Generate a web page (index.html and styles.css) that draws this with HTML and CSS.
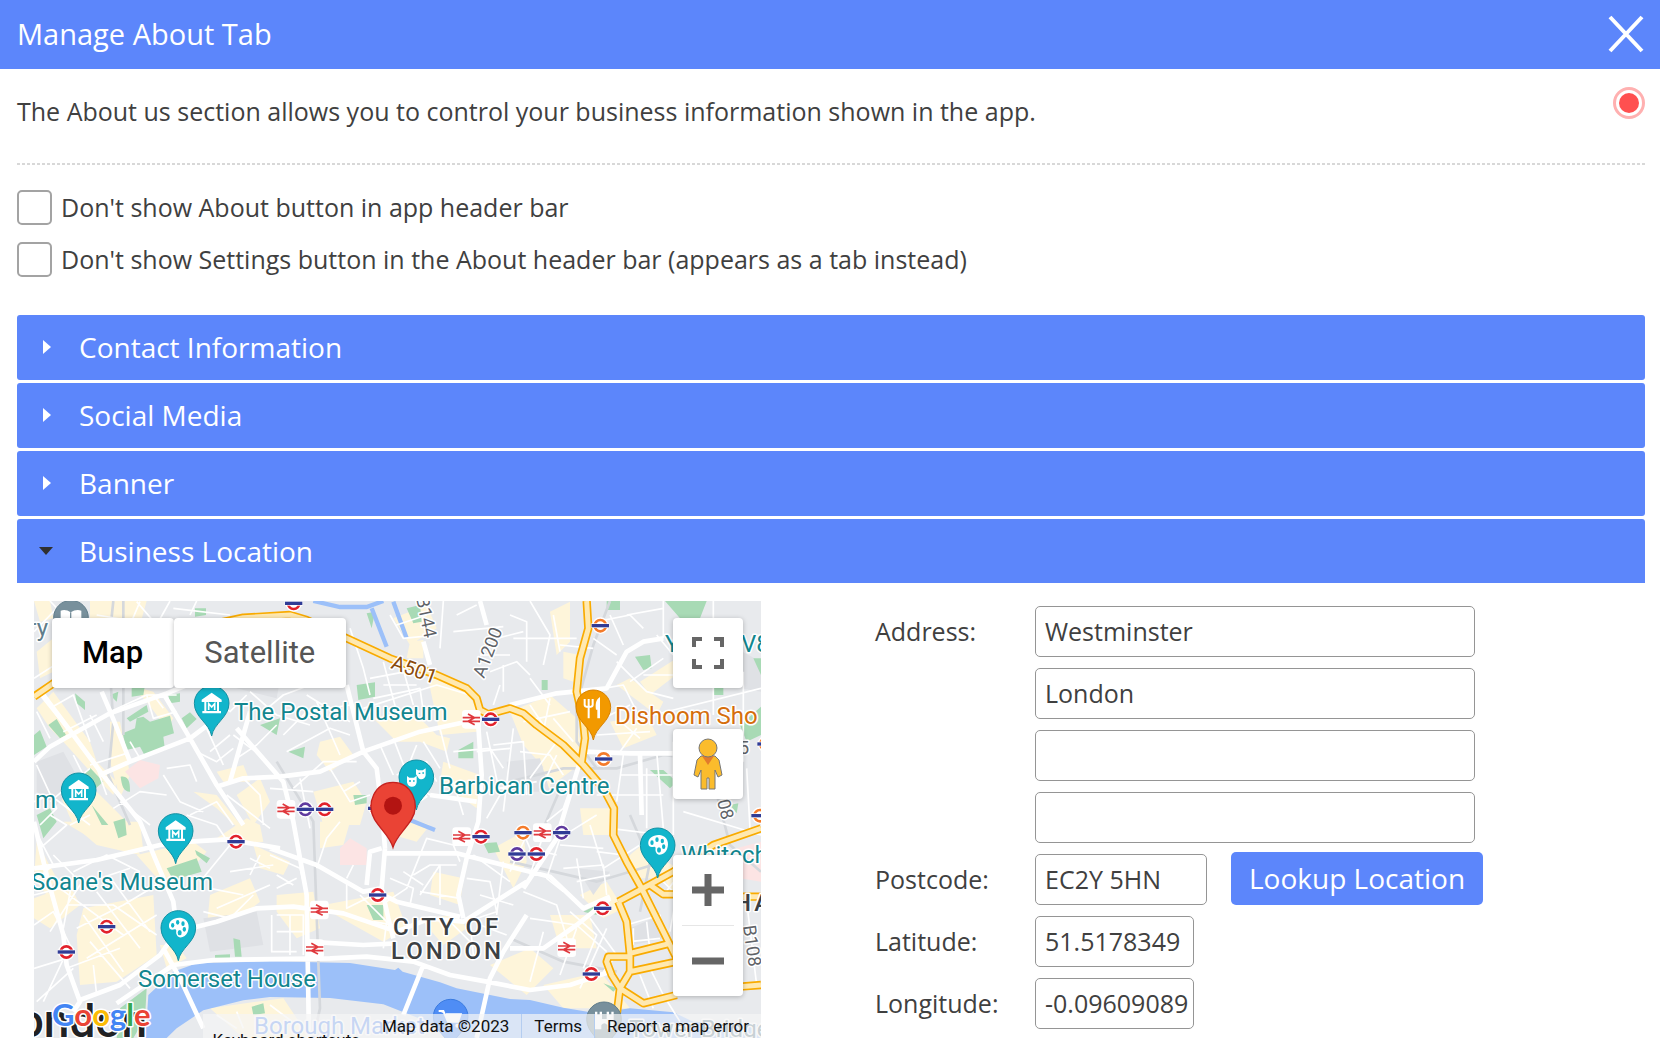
FILE: index.html
```html
<!DOCTYPE html>
<html lang="en">
<head>
<meta charset="utf-8">
<meta name="viewport" content="width=device-width, initial-scale=1">
<title>Manage About Tab</title>
<link rel="stylesheet" href="styles.css">
</head>
<body>
<header class="titlebar">
  <h1 class="title">Manage About Tab</h1>
  <button class="close" type="button" aria-label="Close"><svg viewBox="0 0 36 38" width="36" height="38"><path d="M2 2 34 36M34 2 2 36" stroke="#fff" stroke-width="4" fill="none"/></svg></button>
</header>
<main class="content">
  <div class="intro">
    <p class="intro-text">The About us section allows you to control your business information shown in the app.</p>
    <span class="record"></span>
  </div>
  <div class="options">
    <label class="option"><input class="check" type="checkbox"><span>Don't show About button in app header bar</span></label>
    <label class="option"><input class="check" type="checkbox"><span>Don't show Settings button in the About header bar (appears as a tab instead)</span></label>
  </div>
  <div class="accordion">
    <button class="section" type="button" aria-expanded="false"><span class="arrow"></span>Contact Information</button>
    <button class="section" type="button" aria-expanded="false"><span class="arrow"></span>Social Media</button>
    <button class="section" type="button" aria-expanded="false"><span class="arrow"></span>Banner</button>
    <button class="section section-open" type="button" aria-expanded="true"><span class="arrow arrow-down"></span>Business Location</button>
  </div>
  <div class="panel">
    <div class="map">
      <svg class="map-layer" viewBox="12 18 2181 1311" preserveAspectRatio="xMinYMin slice" aria-hidden="true">
        <defs>
          <path id="drop" d="M0 98C-6 60-52 42-52 0A52 52 0 1 1 52 0C52 42 6 60 0 98Z"/>
          <g id="bar"><rect x="-27" y="-7" width="54" height="14" fill="#fff"/><rect x="-26" y="-5" width="52" height="10" fill="#303c96"/></g>
          <g id="red"><circle r="25" fill="#fff"/><circle r="17" fill="#fff" stroke="#e2222b" stroke-width="8"/><use href="#bar"/></g>
          <g id="purple"><circle r="25" fill="#fff"/><circle r="17" fill="#fff" stroke="#5f3a9e" stroke-width="8"/><use href="#bar"/></g>
          <g id="orange"><circle r="25" fill="#fff"/><circle r="17" fill="#fff" stroke="#f47b2a" stroke-width="8"/><use href="#bar"/></g>
          <g id="rail"><rect x="-28" y="-28" width="56" height="56" rx="10" fill="#fff"/><path d="M-26-5H26M-26 6H26M-10-16 10-5-10 6 10 16" fill="none" stroke="#e0393e" stroke-width="5"/></g>
          <g id="museum" fill="#fff"><path d="M-30-16 0-37 30-16V-9H-30ZM-22-9H-16V18H-22ZM16-9H22V18H16ZM-28 18H28V25H-28Z"/><path d="M-9 15V-4L0 6 9-4V15" fill="none" stroke="#fff" stroke-width="5"/></g>
          <g id="palette"><path d="M-28-4C-30-22-10-34 10-30 28-26 36-8 28 12 22 28 2 34-4 22-10 12-2 6-10 4-20 6-26 6-28-4Z" fill="#fff"/><g fill="#12b5cb"><ellipse cx="-17" cy="-8" rx="5" ry="7"/><ellipse cx="-2" cy="-17" rx="5" ry="7"/><ellipse cx="14" cy="-13" rx="5" ry="7"/><ellipse cx="18" cy="4" rx="5" ry="7"/><ellipse cx="4" cy="14" rx="6" ry="8"/></g></g>
          <path id="trunk" d="M12 305 70 265 120 230M560 85 640 68 780 60 830 75 950 130 1080 190 1220 240 1310 280 1340 310 1350 345 1375 358 1440 340 1480 355 1520 390 1600 450 1660 510 1720 580 1752 640 1750 720 1790 800 1835 880 1880 970 1920 1050 1945 1100M1670 18 1675 100 1650 190 1640 290 1660 380 1665 430 1655 500M1765 920 1830 885 1930 830 2050 750 2193 700M1765 920 1790 980 1800 1080V1130L1770 1180 1840 1225 1940 1200M1800 1075 1920 1045M1800 1130 1940 1100M1800 1085H1735L1730 1100 1745 1140 1770 1180 1760 1260M1860 870 1900 898H1930M2130 905H2193M2130 1175 2193 1170"/>
        </defs>
        <rect x="12" y="18" width="2181" height="1311" fill="#e8eaed"/>
        <!-- built-up areas -->
        <g fill="#fef5da">
          <path d="M12 18H60L70 70 30 80ZM180 18H350L330 90H250L240 200 180 150ZM20 170 70 130V230L30 250ZM20 340 70 290 180 440 200 500 260 560 250 600 190 540 100 440 60 400ZM240 380H270L290 480 300 540 270 610 240 500ZM90 600 200 590 250 640 300 690 330 780 200 750 130 690ZM300 270 370 290 430 370 410 400 350 320ZM490 590 560 600 640 700 690 760 560 640ZM620 600 690 550 720 620 670 690ZM560 530 640 510 660 560 580 560Z"/>
          <path d="M1090 70 1190 30 1220 100 1140 150ZM1140 140 1180 135V190H1130ZM1190 230 1310 280 1350 370 1340 410 1230 420ZM870 440 930 425 970 480 900 530 860 480ZM1030 370 1140 340 1220 420 1260 430 1250 470 1170 440 1100 440ZM850 590 970 560 1010 620 990 690H880ZM1240 500 1350 540 1340 640 1230 560ZM1440 350 1560 300 1640 370 1660 500 1580 560 1480 450ZM1560 50 1620 20V140L1580 180ZM1600 170 1650 180 1630 260 1600 250ZM1650 640 1750 640 1760 720H1660ZM1740 380 1850 360 1880 420 1780 460ZM1760 270 1800 250 1900 320 1880 360ZM1830 260 1940 190 1950 230 1860 300ZM1500 500 1570 530 1560 580 1490 570Z"/>
          <path d="M100 680 330 680 340 770 200 740ZM320 780 490 740 530 770 460 850 400 870ZM12 910 120 870 150 930 60 1000 12 970ZM160 940 370 900 380 1080 260 1160 150 1170 140 1020ZM390 1050 440 1050 470 1090 410 1120ZM540 900 660 850 690 920 580 1010 530 1000ZM20 740 80 850 50 900 12 850ZM560 730 620 750 700 740 690 690 650 670ZM670 750 780 800 760 840 690 820Z"/>
          <path d="M740 900 850 890 870 1000 800 1030 740 950ZM880 930 1090 890 1130 1000 1060 1040 900 950ZM1210 830 1300 850 1290 930 1200 900ZM1170 970 1280 960 1310 1000 1240 1050ZM1110 660 1200 690 1160 740 1090 720ZM870 680 960 680 940 750 870 760ZM1390 760 1480 710 1490 800 1450 880ZM1380 1110 1500 1060 1570 1120 1490 1200ZM1560 960 1680 960 1700 1060 1590 1060ZM1650 900 1730 860 1780 940 1720 970ZM1800 780 1860 730 1880 850 1800 850ZM1540 1170 1710 1130 1800 1240 1600 1240ZM1860 770 1960 830 1940 920ZM540 1240 680 1220 760 1210 840 1329H640Z"/>
        </g>
        <path d="M1950 70 2193 200V290L1950 250ZM640 130 760 200 740 310 620 280ZM20 500 100 470 150 560 80 630 20 590ZM1640 820 1740 830 1690 900ZM1800 1000 1870 970 1900 1030 1810 1050ZM1430 500 1530 490 1560 590 1440 590ZM520 970 680 950 700 1050 540 1070Z" fill="#dfe1e5"/>
        <path d="M285 530 330 495 390 510 385 550 330 580ZM930 760 960 730 1010 760V810L930 810ZM2120 760 2193 740V860L2130 850Z" fill="#fce4e4"/>
        <!-- parks -->
        <g fill="#a8dab5">
          <path d="M135 295 165 320V345L140 325ZM240 300 265 290 260 320ZM305 280 345 270 340 300 305 305ZM290 370 350 330 355 350 300 380ZM415 300 450 295V320L420 325ZM278 415 315 400 320 370 340 365 360 380 420 362 432 415 400 425 405 465 345 483 330 455 290 465ZM55 390 80 372 108 420 90 430ZM12 420 30 405 50 455 12 480ZM455 370 480 352 500 372 470 400ZM495 40H528V60L495 65ZM160 535 180 518 220 560 185 590ZM272 545C300 540 300 570 300 590 280 590 275 570 272 545ZM185 630 235 690H215ZM20 660 60 640 80 680 40 730ZM250 680 285 670 290 720 265 730ZM690 390 750 370 740 420Z"/>
          <path d="M1010 55 1035 50 1025 100ZM1130 40 1170 30 1175 80 1150 85ZM980 270 1035 262V305L985 315ZM775 470 825 455 820 490ZM1285 465 1330 440 1330 490H1285ZM970 600H1010V625L975 630ZM1730 18H1770V45H1730ZM1905 18H2030L2010 70H1950ZM1815 185 1860 180 1865 220 1840 225ZM1535 255H1553V285H1535ZM1860 525H1900L1940 560 1920 580ZM2050 275H2080V300H2050ZM2130 390 2193 335V420L2150 440ZM2100 630 2125 625 2120 655ZM2170 190H2193V240Z"/>
          <path d="M410 820 500 790 515 830 430 855ZM495 765 540 790 530 805 500 780ZM610 1030 630 1035 635 1085 615 1085ZM665 1235 700 1225 705 1255 670 1260ZM270 1240 350 1180 345 1270 310 1329H260ZM1010 930H1060V975H1030ZM1360 745 1400 742 1410 770 1375 775ZM1660 950 1700 930 1700 960ZM1720 1165 1760 1180 1750 1190ZM555 1080 600 1078V1090H555Z"/>
        </g>
        <!-- river and canals -->
        <path d="M335 1329 350 1280 355 1200 430 1130 500 1105 720 1099 960 1104 1095 1125 1105 1118 1118 1130 1230 1162 1280 1180 1440 1212 1500 1215 1600 1238 1700 1255 1800 1240 1930 1252 1990 1280 2193 1290V1329H1260L1180 1275 1060 1228 900 1209 720 1206 640 1216 520 1246 440 1300 410 1329Z" fill="#9cc0f9"/>
        <path d="M850 18 930 36 1010 36 1060 18M1025 40 1070 155M1090 20 1130 130M1140 675 1215 705" fill="none" stroke="#9cc0f9" stroke-width="13"/>
        <!-- railways -->
        <path d="M250 18 235 160 250 380 235 540 300 690 M280 18 V420M740 500 850 680 870 1240 850 1329M1440 560 1600 520 1760 520 1900 480 1990 490M1600 560 1540 700M1740 18 1690 150 1640 330 1640 440 1700 520M1440 800 1700 860 1900 800M1440 1030 1600 1100 1760 1130 M1800 660 1860 800 1830 950 M2040 520 2100 750 2193 830" fill="none" stroke="#d5d8dc" stroke-width="8"/>
        <!-- minor streets -->
        <g fill="none" stroke="#fff" stroke-width="5" stroke-linejoin="round">
          <path d="M12 110 90 30M60 18 100 60M12 250 90 200M20 350 60 430M60 340 130 300 180 440M110 400 30 300M130 480 170 560 190 620M100 410 200 360M180 510 290 475M190 490 230 600M300 440 330 490M20 510 80 640 30 690M60 620 180 520M12 620 60 600 180 690M250 640 330 590 410 600M270 620 360 690M400 540 450 620 520 650M410 520 480 510 500 560M500 470 560 500 610 460M370 300 400 340M240 350 350 300 440 300M350 300 370 370 440 350M180 360 220 440M520 300 600 350 650 300M600 420 540 470M530 400 580 510M610 420 690 480M480 660 560 620 610 690M590 600 720 700M640 550 690 600 700 690M620 490 680 450 740 390M700 350 760 300 840 270M660 290 740 360 840 390M720 580 850 590M330 20 300 90M200 60 380 90 420 18M430 40 600 60M480 60 500 18M380 90 320 20"/>
          <path d="M760 420 830 350 960 330M770 470 900 400 960 420M830 300 960 380M860 320 930 480M790 580 880 500 980 500M810 550 840 700M900 520 960 620 1020 600M940 590 990 560M960 100 1000 220 1020 300M1020 250 1180 220M1030 310 1170 280 1180 350M1000 340 1220 270 1320 300M1060 200 1100 350M1110 190 1150 330M1060 270H1160M1080 60 1120 130 1220 120M1100 90 1190 60M1240 18 1230 160M1280 60 1340 30M1270 110 1420 95M1400 130 1480 110M1380 230 1460 200 1500 240M1350 180 1440 180M1410 270 1390 330M1420 210V290M1270 470 1380 460 1420 520M1230 400 1260 520M1180 440 1230 520M1090 430 1140 560 1200 600M1100 540 1190 500 1220 560M1160 450 1140 500M1050 450 1090 540M1270 560 1300 660M1340 470 1440 460M1370 410 1410 600 1370 670M1450 400 1420 650M1390 450 1480 440 1490 600M1350 590 1520 560"/>
          <path d="M1440 60 1490 80 1490 200M1450 130 1640 130M1500 18 1560 120 1540 210M1570 60 1590 170M1590 150 1690 160M1690 130 1760 180M1700 80 1800 60 1840 100M1740 60 1780 150M1790 60 1900 40M1760 200 1850 290 1930 310M1720 280 1780 270 1820 350M1800 260 1900 190M1900 18 1900 130M1880 120 1930 180M1840 240 1930 240M1500 250 1560 330M1560 310 1540 410M1500 330 1560 420M1480 380 1620 350M1570 370 1630 440M1470 470 1560 480 1600 540M1500 550 1580 440M1530 590 1580 480M1650 500 1600 640 1550 680M1700 600 1900 600M1780 480 1760 620M1880 470 1900 700M1850 520V700M1770 540 1930 540M1930 440V720M1760 370 1830 430M1820 400 1770 470M1700 420 1860 410M1700 380 1800 330M1870 360 2193 280M2050 18V360M2140 230V500M2150 520 2160 700M1960 650 2193 720"/>
          <path d="M12 700 70 810 12 860M30 760 110 690 60 660M120 690 180 660M70 780 130 840 100 1000M130 830 230 780 330 830M12 900 90 880 280 1020M60 1010 150 870 300 820M110 930 250 930 380 1020M140 1000 280 930 380 870M160 960 280 1130M200 890 330 1060M250 860 360 1010M170 1090 380 960M180 1040 300 1180M110 1120 270 1060M12 990 70 950 120 1050 40 1220M20 1220 130 1120M12 1120 110 1090M190 1110 200 1200M470 660 560 690M510 860 600 750 560 690M600 830 730 810M660 840 690 780M540 880 640 900M560 940 720 870M660 790 720 820M520 950 600 970 670 900M720 780 810 820 830 900M740 880 800 850M740 960 820 960 820 1080M725 960V1070H800M780 960V1080M740 1010H820M740 840 790 870M950 850 970 810M860 820 890 730 930 680M950 860 950 940 1030 900M990 900 1070 980 1060 1060M1030 980 1090 990M1080 850 1150 880 1140 930M1070 920 1130 880 1190 730 1270 750 1290 800M1120 830 1180 870M1170 900 1230 810 1230 930M1170 890 1290 910M1150 840 1200 810H1280M1310 850 1380 860 1400 950 1310 980M1330 780 1440 860M1420 800 1400 960M1350 900 1450 930M1260 980 1320 1040M1320 980 1330 1080M1350 990 1430 1020"/>
          <path d="M1470 690 1500 760 1580 780M1490 720 1440 830M1540 720 1500 840M1590 730 1550 850 1600 890M1640 790 1660 910M1700 660 1620 710M1680 690 1720 820 1830 750M1700 770 1780 780M1600 820 1720 810 1730 900M1590 750 1720 760M1640 860 1740 840M1480 890 1580 930 1620 1060M1500 970 1640 990 1730 1070M1620 950 1700 1020 1660 1120M1540 1010 1500 1160M1640 1000 1590 1140M1680 970 1760 1080 1720 1130M1730 1000 1650 1180M1790 990 1890 960 1900 1030M1810 1000V1050M1850 980 1860 1070M1800 1040 1890 1030M1860 1120 1900 1200 1950 1280M1830 1140 1870 1240M2150 920 2180 1170M1900 900 1940 850M1740 700 1900 720M1890 850 1940 900 1920 1010M560 1260 620 1300M620 1250 640 1300M720 1230 800 1290"/>
        </g>
        <!-- main streets -->
        <path d="M12 500 60 455 240 355 410 295 520 250M40 300 130 420 215 535 330 680 375 790 430 920 440 1000M400 295 480 430 560 570 640 690M210 540 300 500 480 430 560 370M215 290 245 360 300 500M12 820 200 795 390 750 480 740 590 733 750 760M600 560 640 420 660 350M560 575 640 550 750 545 870 530 1000 470 1170 410 1310 380M620 400 760 560 790 680 830 900 837 1329M950 270 1000 470 1040 520 1055 640 1065 760M720 760 860 810 1000 890 1055 880M12 680 50 840 100 1020 110 1110 150 1220 130 1250M150 1215 270 1170 390 1080 440 1010 560 980 680 940 790 935 940 955 1100 1010 1200 970 1300 980 1490 860M260 1225 430 1110 550 1095 900 1090 1010 1085 1150 1100 1260 1140 1370 1160 1500 1185 1620 1170 1740 1130M400 1060 450 1150 520 1300M830 1040 1000 1050 1100 1045M1060 900 1100 920 1290 965M1055 760 1020 770 1010 870M1065 760 1055 880 1075 970 1090 1030M1065 775 1280 775 1440 815 1560 845 1660 940 1740 905M1340 320 1355 540 1345 680 1310 790 1285 900 1300 970M1180 140 1200 210M1350 18 1370 90M1200 600 1340 620M1190 600 1130 640M1180 1110 1120 1260M1490 960 1420 1070 1380 1150 1340 1329M1440 330 1580 295 1730 280 1790 170 1840 140 1900 130M1660 470 1800 475 1980 475M1830 480 1835 660M1440 1060 1540 1060 1640 990 1740 910M1480 880 1580 730 1650 500" fill="none" stroke="#fff" stroke-width="14" stroke-linejoin="round"/>
        <!-- trunk roads -->
        <g fill="none" stroke-linejoin="round"><use href="#trunk" stroke="#f9ab00" stroke-width="25"/><use href="#trunk" stroke="#ffe9b0" stroke-width="15"/></g>
        <!-- stations -->
        <use href="#red" x="791" y="25"/><use href="#rail" x="1324" y="373"/><use href="#red" x="1382" y="373"/>
        <use href="#rail" x="768" y="643"/><use href="#purple" x="826" y="643"/><use href="#red" x="884" y="643"/><use href="#red" x="1040" y="640"/>
        <use href="#orange" x="1711" y="92"/><use href="#orange" x="1721" y="492"/><use href="#orange" x="2190" y="662"/><use href="#orange" x="2208" y="447"/>
        <use href="#red" x="618" y="740"/><use href="#red" x="230" y="995"/><use href="#red" x="109" y="1071"/>
        <use href="#rail" x="1295" y="725"/><use href="#red" x="1353" y="725"/><use href="#red" x="1043" y="900"/><use href="#rail" x="868" y="945"/><use href="#rail" x="854" y="1061"/>
        <use href="#orange" x="1479" y="713"/><use href="#rail" x="1537" y="713"/><use href="#purple" x="1595" y="713"/><use href="#purple" x="1461" y="777"/><use href="#red" x="1519" y="777"/>
        <use href="#red" x="1718" y="940"/><use href="#rail" x="1610" y="1058"/><use href="#red" x="1684" y="1137"/>
        <!-- places -->
        <g fill="#12b5cb" stroke="#1491a3" stroke-width="3"><use href="#drop" x="545" y="325"/><use href="#drop" x="146" y="586"/><use href="#drop" x="437" y="708"/><use href="#drop" x="445" y="999"/><use href="#drop" x="1159" y="547"/><use href="#drop" x="1883" y="751"/></g>
        <use href="#museum" x="545" y="330"/><use href="#museum" x="146" y="591"/><use href="#museum" x="437" y="713"/><use href="#palette" x="445" y="999"/><use href="#palette" x="1883" y="751"/>
        <path d="M1131 543 1138 548H1152L1160 542V562C1158 580 1134 580 1131 562ZM1158 522 1165 526H1178L1187 520V541C1185 555 1170 556 1165 548L1158 538Z" fill="#fff"/>
        <path d="M1137 558H1143M1149 558H1154M1166 535H1171M1177 534H1182" stroke="#12b5cb" stroke-width="4"/>
        <use href="#drop" x="1690" y="337" fill="#f29900" stroke="#d78100" stroke-width="3"/>
        <path d="M1664 312V330C1664 338 1688 338 1688 330V312M1676 312V370" fill="none" stroke="#fff" stroke-width="6"/><path d="M1710 306C1696 314 1696 332 1698 344H1702V370H1710Z" fill="#fff"/>
        <use href="#drop" x="123" y="68" fill="#78909c" stroke="#607d8b" stroke-width="3"/><path d="M92 47Q108 42 122 52 138 42 154 47V88Q138 82 122 90 108 82 92 88Z" fill="#fff"/><path d="M122 52V90" stroke="#78909c" stroke-width="4"/>
        <use href="#drop" x="1262" y="1265" fill="#4f8df5" stroke="#3a7be0" stroke-width="3"/><path d="M1226 1248H1240L1254 1280H1284L1292 1258H1248" fill="#fff" stroke="#fff" stroke-width="6"/><circle cx="1258" cy="1292" r="6" fill="#fff"/><circle cx="1282" cy="1292" r="6" fill="#fff"/>
        <use href="#drop" x="1722" y="1273" fill="#78909c" stroke="#607d8b" stroke-width="3"/><path d="M1695 1303V1250H1702V1259H1709V1250H1716V1272H1730V1250H1737V1259H1744V1250H1751V1303H1732V1290Q1723 1280 1714 1290V1303Z" fill="#fff"/>
        <path d="M1089 757C1080 725 1054 706 1034 674 1006 624 1036 562 1089 562 1142 562 1174 624 1144 674 1124 706 1098 725 1089 757Z" fill="#ea4335" stroke="#c5221f" stroke-width="4"/><circle cx="1089" cy="632" r="27" fill="#b31412"/>
      </svg>
      <svg class="map-layer map-labels" viewBox="0 0 727 437" preserveAspectRatio="xMinYMin slice">
        <g class="poi"><text x="200" y="119">The Postal Museum</text><text x="405" y="193">Barbican Centre</text><text x="647" y="262">Whitech</text><text x="631" y="51">Y</text><text x="707" y="51">V8</text><text x="-3" y="289">Soane's Museum</text><text x="104" y="386">Somerset House</text><text x="1" y="207">m</text></g>
        <text class="food" x="581" y="123">Dishoom Sho</text>
        <text class="civic" x="14" y="35" text-anchor="end">ry</text>
        <text class="civic" x="595" y="436">Tower Bridge</text>
        <text class="shop" x="220" y="433">Borough Market</text>
        <g class="district"><text x="359" y="334">CITY OF</text><text x="357" y="358">LONDON</text><text x="700" y="310">HA</text></g>
        <g class="road"><text class="road-a" transform="translate(356 67) rotate(20)">A501</text><text transform="translate(450 78) rotate(-69)">A1200</text><text transform="translate(382 -3) rotate(78)">B144</text><text transform="translate(709 325) rotate(82)">B108</text><text transform="translate(683 200) rotate(76)">08</text><text x="705" y="153">5</text></g>
        <text class="city" x="113" y="436" text-anchor="end">London</text>
        <text class="google" x="18" y="425"><tspan fill="#4285f4">G</tspan><tspan fill="#ea4335">o</tspan><tspan fill="#fbbc04">o</tspan><tspan fill="#4285f4">g</tspan><tspan fill="#34a853">l</tspan><tspan fill="#ea4335">e</tspan></text>
      </svg>
      <div class="map-types"><button class="map-type map-type-on" type="button">Map</button><button class="map-type" type="button">Satellite</button></div>
      <div class="map-tools">
        <button class="tool" type="button" aria-label="Toggle fullscreen view"><svg width="32" height="32" viewBox="0 0 32 32"><path d="M2 10V2H10M22 2H30V10M30 22V30H22M10 30H2V22" fill="none" stroke="#666" stroke-width="4"/></svg></button>
        <button class="tool pegman" type="button" aria-label="Drag Pegman onto the map"><svg width="30" height="52" viewBox="0 0 30 52"><path d="M8 18 22 18 26 22 29 37 25 39 22 32V51H16V40H14V51H8V32L5 39 1 37 4 22Z" fill="#fbbc2c" stroke="#777" stroke-width="1"/><path d="M9 18H21L15 27Z" fill="#e27b2c"/><circle cx="15" cy="10" r="9" fill="#fbbc2c" stroke="#777"/></svg></button>
        <div class="zoom">
          <button class="zoom-button" type="button" aria-label="Zoom in"><svg width="32" height="32" viewBox="0 0 32 32"><path d="M0 16H32M16 0V32" stroke="#666" stroke-width="7"/></svg></button>
          <button class="zoom-button" type="button" aria-label="Zoom out"><svg width="32" height="32" viewBox="0 0 32 32"><path d="M0 16H32" stroke="#666" stroke-width="7"/></svg></button>
        </div>
      </div>
      <div class="credits"><button class="shortcuts" type="button">Keyboard shortcuts</button><span class="credit">Map data ©2023</span><a class="credit" href="#terms">Terms</a><a class="credit" href="#report">Report a map error</a></div>
    </div>
    <form class="form">
      <label class="label" for="address1">Address:</label>
      <div class="fields"><input class="input" id="address1" type="text" value="Westminster"><input class="input" type="text" value="London" aria-label="Address line 2"><input class="input" type="text" aria-label="Address line 3"><input class="input" type="text" aria-label="Address line 4"></div>
      <label class="label" for="postcode">Postcode:</label>
      <div class="postcode-row"><input class="input input-postcode" id="postcode" type="text" value="EC2Y 5HN"><button class="lookup" type="button">Lookup Location</button></div>
      <label class="label" for="latitude">Latitude:</label>
      <input class="input input-coord" id="latitude" type="text" value="51.5178349">
      <label class="label" for="longitude">Longitude:</label>
      <input class="input input-coord" id="longitude" type="text" value="-0.09609089">
    </form>
  </div>
</main>
</body>
</html>
```
FILE: styles.css
```css
* { box-sizing: border-box; }

body {
  margin: 0;
  background: #fff;
  color: #404040;
  font: 25px/34px "Open Sans", sans-serif;
}

button, input { font: inherit; color: inherit; margin: 0; }
button { border: 0; padding: 0; background: none; cursor: pointer; }

.titlebar {
  display: flex;
  align-items: center;
  justify-content: space-between;
  height: 69px;
  padding: 0 16px 2px 17px;
  background: #5c86fb;
  color: #fff;
}
.title { margin: 0; font-size: 29px; font-weight: 400; line-height: 40px; }
.close { display: flex; }

.content { padding: 0 15px 0 17px; }

.intro {
  display: flex;
  align-items: flex-start;
  justify-content: space-between;
  height: 96px;
  padding-top: 18px;
  background: repeating-linear-gradient(90deg, #d8d8d8 0 3px, #fff 3px 5px) left bottom / 100% 2px no-repeat;
}
.intro-text { margin: 7px 0 0; }
.record {
  width: 32px;
  height: 32px;
  border: 3px solid #ffb0b0;
  border-radius: 50%;
  padding: 3px;
  background: #ff5050;
  background-clip: content-box;
}

.options { display: flex; flex-direction: column; gap: 17px; padding: 25px 0 38px; }
.option { display: flex; align-items: center; gap: 9px; height: 35px; line-height: 32px; }
.option span { padding-bottom: 2px; }
.check {
  appearance: none;
  width: 35px;
  height: 35px;
  margin: 0;
  border: 2px solid #a3a3a3;
  border-radius: 5px;
  background: #fff;
}

.accordion { display: flex; flex-direction: column; gap: 3px; }
.section {
  display: flex;
  align-items: center;
  height: 65px;
  padding: 0 0 1px 22px;
  border-radius: 3px;
  background: #5c86fb;
  color: #fff;
  font-size: 28px;
  text-align: left;
}
.section-open { height: 64px; border-radius: 3px 3px 0 0; }
.arrow { display: flex; width: 40px; padding-left: 4px; }
.arrow::before { content: ""; border-left: 8px solid #fff; border-top: 7px solid transparent; border-bottom: 7px solid transparent; }
.arrow-down { padding-left: 0; }
.arrow-down::before { border: 7px solid transparent; border-top: 8px solid #303030; border-bottom: 0; }

.panel {
  display: grid;
  grid-template-columns: minmax(0, 727fr) minmax(0, 770fr);
  gap: 114px;
  padding: 18px 0 8px 17px;
}

.map { position: relative; height: 437px; overflow: hidden; background: #e8eaed; font-family: Roboto, sans-serif; }
.map-layer { position: absolute; inset: 0; width: 100%; height: 100%; }

.map-labels { font-size: 24px; }
.map-labels text { paint-order: stroke; stroke: #fff; stroke-width: 3px; stroke-linejoin: round; }
.poi { fill: #12868f; }
.food { fill: #d56e0c; }
.civic { fill: #607d8b; }
.shop { fill: #5b8def; }
.district { fill: #3c4043; font-weight: 500; letter-spacing: 3px; }
.road { fill: #5f6368; font-size: 18px; }
.road-a { fill: #8a4b0b; font-size: 20px; }
.city { fill: #202124; font-size: 46px; font-weight: 500; }
.google { font-family: Lato, sans-serif; font-size: 31px; font-weight: 700; }

.map-types { position: absolute; left: 18px; top: 17px; display: flex; }
.map-type {
  height: 70px;
  padding: 0 31px 0 30px;
  border-radius: 4px;
  background: #fff;
  color: #565656;
  font-size: 31px;
  box-shadow: 0 1px 5px rgba(0, 0, 0, .25);
}
.map-type-on { color: #000; font-weight: 500; }

.map-tools { position: absolute; right: 18px; top: 17px; display: flex; flex-direction: column; }
.tool, .zoom-button { display: flex; align-items: center; justify-content: center; width: 70px; height: 70px; }
.tool, .zoom { border-radius: 4px; background: #fff; box-shadow: 0 1px 5px rgba(0, 0, 0, .25); }
.pegman { margin-top: 41px; }
.zoom { margin-top: 56px; }
.zoom-button + .zoom-button { height: 71px; background: linear-gradient(#e6e6e6, #e6e6e6) center top / 52px 1px no-repeat; }

.credits {
  position: absolute;
  right: 0;
  bottom: 0;
  display: flex;
  justify-content: flex-end;
  height: 24px;
  background: rgba(245, 245, 245, .7);
  color: #111;
  font-size: 17px;
  line-height: 24px;
  white-space: nowrap;
}
.credit { padding: 0 12px; color: inherit; text-decoration: none; }
.credit + .credit { border-left: 1px solid #b4cdf0; }
.shortcuts { align-self: flex-start; padding: 16px 10px 0; line-height: 20px; }

.form { display: grid; grid-template-columns: 160px minmax(0, 1fr); gap: 11px 0; align-content: start; padding-top: 5px; }
.label { height: 51px; line-height: 50px; }
.fields { display: flex; flex-direction: column; gap: 11px; }
.input {
  width: 100%;
  max-width: 440px;
  height: 51px;
  padding: 0 0 2px 9px;
  border: 1px solid #959595;
  border-radius: 5px;
  background: #fff;
}
.postcode-row { display: flex; align-items: flex-end; gap: 24px; height: 51px; }
.input-postcode { width: 172px; }
.input-coord { width: 159px; }
.lookup { height: 53px; padding: 0 18px 1px; border-radius: 5px; background: #5c86fb; color: #fff; font-size: 28px; }
```
